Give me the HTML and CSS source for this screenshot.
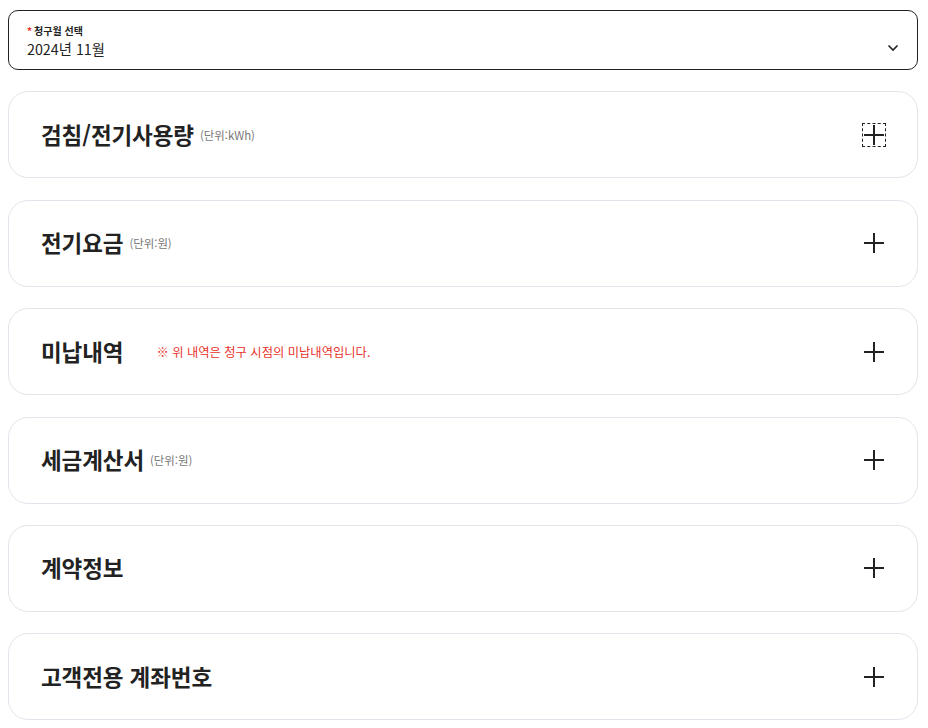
FILE: index.html
```html
<!DOCTYPE html>
<html lang="ko">
<head>
<meta charset="utf-8">
<link rel="stylesheet" href="styles.css">
</head>
<body>
<div class="page">
  <div class="select">
    <div class="select-text">
      <div class="select-label"><span class="req">*</span>청구월 선택</div>
      <div class="select-value">2024년 11월</div>
    </div>
    <svg class="chev" width="12" height="8" viewBox="0 0 12 8"><path d="M1.5 1.5 L6 6 L10.5 1.5" fill="none" stroke="#222" stroke-width="1.6"/></svg>
  </div>

  <div class="card">
    <div class="title-wrap"><span class="title">검침/전기사용량</span><span class="unit">(단위:kWh)</span></div>
    <span class="plus focused"><svg width="20" height="20" viewBox="0 0 20 20"><path d="M10 0V20M0 10H20" stroke="#222" stroke-width="2"/></svg></span>
  </div>
  <div class="card">
    <div class="title-wrap"><span class="title">전기요금</span><span class="unit">(단위:원)</span></div>
    <span class="plus"><svg width="20" height="20" viewBox="0 0 20 20"><path d="M10 0V20M0 10H20" stroke="#222" stroke-width="2"/></svg></span>
  </div>
  <div class="card">
    <div class="title-wrap"><span class="title">미납내역</span><span class="note">※ 위 내역은 청구 시점의 미납내역입니다.</span></div>
    <span class="plus"><svg width="20" height="20" viewBox="0 0 20 20"><path d="M10 0V20M0 10H20" stroke="#222" stroke-width="2"/></svg></span>
  </div>
  <div class="card">
    <div class="title-wrap"><span class="title">세금계산서</span><span class="unit">(단위:원)</span></div>
    <span class="plus"><svg width="20" height="20" viewBox="0 0 20 20"><path d="M10 0V20M0 10H20" stroke="#222" stroke-width="2"/></svg></span>
  </div>
  <div class="card">
    <div class="title-wrap"><span class="title">계약정보</span></div>
    <span class="plus"><svg width="20" height="20" viewBox="0 0 20 20"><path d="M10 0V20M0 10H20" stroke="#222" stroke-width="2"/></svg></span>
  </div>
  <div class="card">
    <div class="title-wrap"><span class="title">고객전용 계좌번호</span></div>
    <span class="plus"><svg width="20" height="20" viewBox="0 0 20 20"><path d="M10 0V20M0 10H20" stroke="#222" stroke-width="2"/></svg></span>
  </div>
</div>
</body>
</html>
```

FILE: styles.css
```css
* { box-sizing: border-box; }
html, body { margin: 0; padding: 0; background: #fff; }
body {
  font-family: "Noto Sans CJK KR", "Noto Sans", sans-serif;
  color: #222;
}
.page {
  padding: 10px 10px 0 8px;
  display: flex;
  flex-direction: column;
  gap: 21.4px;
}
.select {
  height: 60px;
  border: 1px solid #222;
  border-radius: 10px;
  display: flex;
  align-items: center;
  justify-content: space-between;
  padding: 0 18px 0 18px;
}
.select-text { display: flex; flex-direction: column; }
.select-label {
  font-size: 10px;
  font-weight: 700;
  line-height: 14px;
  color: #222;
  margin-top: 2px;
}
.req { color: #e8322b; margin-right: 2px; }
.select-value {
  font-size: 14.3px;
  line-height: 20px;
  color: #222;
  margin-top: 1px;
}
.chev { margin-top: 15px; }
.card {
  height: 87px;
  border: 1px solid #e1e4ea;
  border-radius: 20px;
  display: flex;
  align-items: center;
  justify-content: space-between;
  padding: 0 32px;
}
.title-wrap { display: flex; align-items: center; margin-top: -2px; }
.title {
  font-size: 22.5px;
  font-weight: 700;
  color: #222;
  letter-spacing: -0.1px;
}
.unit {
  font-size: 11.4px;
  color: #777;
  margin-left: 6px;
  margin-top: 2px;
}
.note {
  font-size: 12.3px;
  color: #e8322b;
  margin-left: 33px;
  margin-top: 2px;
}
.plus {
  width: 22px;
  height: 22px;
  display: flex;
  align-items: center;
  justify-content: center;
}
.plus.focused { outline: 1px dashed #222; }
```
